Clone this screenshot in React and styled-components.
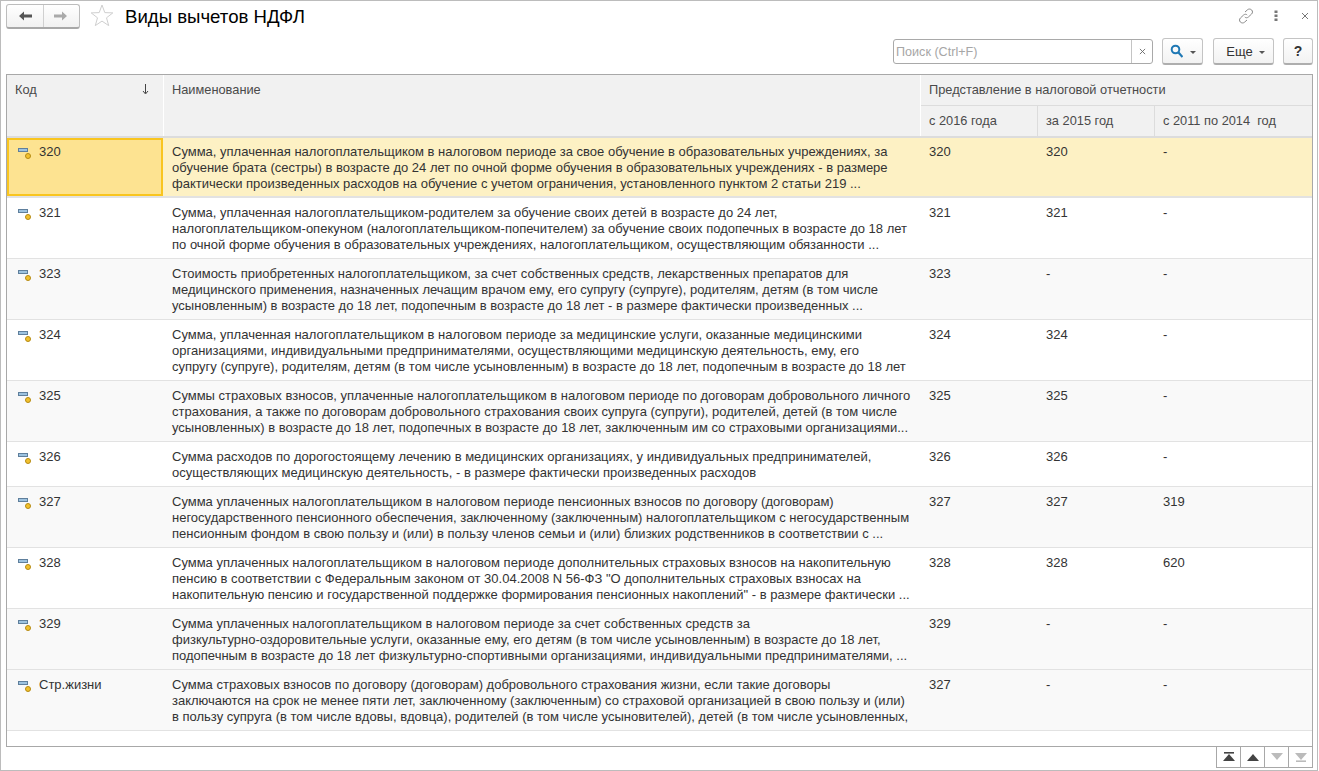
import React from 'react'
import styled, { createGlobalStyle } from 'styled-components'

const Global = createGlobalStyle`
  html, body { margin: 0; padding: 0; background: #fff; }
  body { font-family: "Liberation Sans", Arial, sans-serif; font-size: 13px; color: #333; }
`

const rows = [
  { code: '320', selected: true, a: '320', b: '320', c: '-', lines: [
    'Сумма, уплаченная налогоплательщиком в налоговом периоде за свое обучение в образовательных учреждениях, за',
    'обучение брата (сестры) в возрасте до 24 лет по очной форме обучения в образовательных учреждениях - в размере',
    'фактически произведенных расходов на обучение с учетом ограничения, установленного пунктом 2 статьи 219 ...',
  ] },
  { code: '321', a: '321', b: '321', c: '-', lines: [
    'Сумма, уплаченная налогоплательщиком-родителем за обучение своих детей в возрасте до 24 лет,',
    'налогоплательщиком-опекуном (налогоплательщиком-попечителем) за обучение своих подопечных в возрасте до 18 лет',
    'по очной форме обучения в образовательных учреждениях, налогоплательщиком, осуществляющим обязанности ...',
  ] },
  { code: '323', alt: true, a: '323', b: '-', c: '-', lines: [
    'Стоимость приобретенных налогоплательщиком, за счет собственных средств, лекарственных препаратов для',
    'медицинского применения, назначенных лечащим врачом ему, его супругу (супруге), родителям, детям (в том числе',
    'усыновленным) в возрасте до 18 лет, подопечным в возрасте до 18 лет - в размере фактически произведенных ...',
  ] },
  { code: '324', a: '324', b: '324', c: '-', lines: [
    'Сумма, уплаченная налогоплательщиком в налоговом периоде за медицинские услуги, оказанные медицинскими',
    'организациями, индивидуальными предпринимателями, осуществляющими медицинскую деятельность, ему, его',
    'супругу (супруге), родителям, детям (в том числе усыновленным) в возрасте до 18 лет, подопечным в возрасте до 18 лет',
  ] },
  { code: '325', alt: true, a: '325', b: '325', c: '-', lines: [
    'Суммы страховых взносов, уплаченные налогоплательщиком в налоговом периоде по договорам добровольного личного',
    'страхования, а также по договорам добровольного страхования своих супруга (супруги), родителей, детей (в том числе',
    'усыновленных) в возрасте до 18 лет, подопечных в возрасте до 18 лет, заключенным им со страховыми организациями...',
  ] },
  { code: '326', a: '326', b: '326', c: '-', lines: [
    'Сумма расходов по дорогостоящему лечению в медицинских организациях, у индивидуальных предпринимателей,',
    'осуществляющих медицинскую деятельность, - в размере фактически произведенных расходов',
  ] },
  { code: '327', alt: true, a: '327', b: '327', c: '319', lines: [
    'Сумма уплаченных налогоплательщиком в налоговом периоде пенсионных взносов по договору (договорам)',
    'негосударственного пенсионного обеспечения, заключенному (заключенным) налогоплательщиком с негосударственным',
    'пенсионным фондом в свою пользу и (или) в пользу членов семьи и (или) близких родственников в соответствии с ...',
  ] },
  { code: '328', a: '328', b: '328', c: '620', lines: [
    'Сумма уплаченных налогоплательщиком в налоговом периоде дополнительных страховых взносов на накопительную',
    'пенсию в соответствии с Федеральным законом от 30.04.2008 N 56-ФЗ "О дополнительных страховых взносах на',
    'накопительную пенсию и государственной поддержке формирования пенсионных накоплений" - в размере фактически ...',
  ] },
  { code: '329', alt: true, a: '329', b: '-', c: '-', lines: [
    'Сумма уплаченных налогоплательщиком в налоговом периоде за счет собственных средств за',
    'физкультурно-оздоровительные услуги, оказанные ему, его детям (в том числе усыновленным) в возрасте до 18 лет,',
    'подопечным в возрасте до 18 лет физкультурно-спортивными организациями, индивидуальными предпринимателями, ...',
  ] },
  { code: 'Стр.жизни', alt: true, a: '327', b: '-', c: '-', lines: [
    'Сумма страховых взносов по договору (договорам) добровольного страхования жизни, если такие договоры',
    'заключаются на срок не менее пяти лет, заключенному (заключенным) со страховой организацией в свою пользу и (или)',
    'в пользу супруга (в том числе вдовы, вдовца), родителей (в том числе усыновителей), детей (в том числе усыновленных,',
  ] },
]

const COLS = '156px 757px 117px 117px 1fr'

const Window = styled.div`
  box-sizing: border-box;
  width: 1318px;
  height: 771px;
  border: 1px solid #bcbcbc;
  padding: 0 4px 0 5px;
  display: flex;
  flex-direction: column;
  overflow: hidden;
`

const TitleBar = styled.div`
  height: 33px;
  flex: none;
  padding-top: 3px;
  box-sizing: border-box;
  display: flex;
  align-items: flex-start;
`

const NavGroup = styled.div`
  display: flex;
  width: 74px;
  height: 25px;
  box-sizing: border-box;
  border: 1px solid #bdbdbd;
  border-bottom: 2px solid #a8a8a8;
  border-radius: 3px;
  background: linear-gradient(#fff, #f1f1f1);
  margin-right: 10px;
`

const NavButton = styled.div`
  flex: 1;
  display: flex;
  align-items: center;
  justify-content: center;
  & + & { border-left: 1px solid #d0d0d0; }
`

const Title = styled.h1`
  margin: 2px 0 0 11px;
  font-size: 18.6px;
  line-height: 22px;
  font-weight: 400;
  color: #000;
`

const Spacer = styled.div`
  flex: 1;
`

const WinIcons = styled.div`
  display: flex;
  align-items: center;
  gap: 20px;
  padding-right: 4px;
  height: 24px;
`

const CloseWrap = styled.div`
  margin-left: 3px;
  display: flex;
`

const CommandBar = styled.div`
  height: 40px;
  flex: none;
  box-sizing: border-box;
  padding-top: 4px;
  display: flex;
  justify-content: flex-end;
  align-items: flex-start;
`

const SearchBox = styled.div`
  width: 260px;
  height: 25px;
  box-sizing: border-box;
  margin: 1px 9px 0 0;
  border: 1px solid #a9a9a9;
  border-radius: 3px;
  display: flex;
  align-items: center;
  background: #fff;
`

const SearchText = styled.div`
  flex: 1;
  padding-left: 2px;
  font-size: 12.6px;
  color: #a6a6a6;
`

const SearchClear = styled.div`
  width: 20px;
  height: 100%;
  border-left: 1px solid #c4c4c4;
  display: flex;
  align-items: center;
  justify-content: center;
`

const ToolButton = styled.div`
  width: ${p => p.$w}px;
  height: 27px;
  box-sizing: border-box;
  margin-left: ${p => p.$ml || 0}px;
  border: 1px solid #c4c4c4;
  border-bottom: 2px solid #aeaeae;
  border-radius: 3px;
  background: linear-gradient(#fff, #f2f2f2);
  display: flex;
  align-items: center;
  justify-content: center;
  gap: ${p => p.$gap || 0}px;
  padding-left: ${p => p.$pl || 0}px;
  font-size: ${p => p.$size || 13}px;
  font-weight: ${p => p.$bold ? 700 : 400};
  color: #333;
`

const Caret = styled.span`
  width: 0;
  height: 0;
  margin-top: 2px;
  border-left: 3px solid transparent;
  border-right: 3px solid transparent;
  border-top: 3px solid #555;
`

const Table = styled.div`
  box-sizing: border-box;
  height: 673px;
  width: 1307px;
  flex: none;
  border: 1px solid #a8a8a8;
  display: flex;
  flex-direction: column;
  background: #fff;
`

const Header = styled.div`
  display: grid;
  grid-template-columns: 156px 757px 1fr;
  height: 63px;
  box-sizing: border-box;
  border-bottom: 2px solid #dcdcdc;
  background: #f1f1f1;
  color: #4a4a4a;
  flex: none;
  font-size: 12.8px;
`

const HeadCell = styled.div`
  box-sizing: border-box;
  padding: 7px 8px 0;
  display: flex;
  justify-content: space-between;
  align-items: flex-start;
  line-height: 15px;
  & + & { border-left: 1px solid #fff; }
`

const HeadGroup = styled.div`
  border-left: 1px solid #fff;
  display: flex;
  flex-direction: column;
`

const HeadGroupTitle = styled.div`
  height: 31px;
  flex: none;
  box-sizing: border-box;
  padding: 7px 8px 0;
  line-height: 15px;
  border-bottom: 1px solid #dcdcdc;
`

const HeadSubRow = styled.div`
  flex: 1;
  display: grid;
  grid-template-columns: 116px 117px 1fr;
`

const HeadSub = styled.div`
  padding: 7px 8px 0;
  line-height: 16px;
  white-space: pre;
  & + & { border-left: 1px solid #dcdcdc; }
`

const Row = styled.div`
  display: grid;
  grid-template-columns: ${COLS};
  flex: none;
  height: ${p => p.$selected ? 60 : p.$lines === 2 ? 45 : 61}px;
  box-sizing: border-box;
  border-bottom: ${p => p.$selected ? 2 : 1}px solid #e2e2e2;
  background: ${p => p.$selected ? '#fdf1c4' : p.$alt ? '#f9f9f9' : '#fff'};
`

const Cell = styled.div`
  box-sizing: border-box;
  padding: ${p => p.$selected ? 6 : 7}px 8px 0;
  line-height: 16px;
  color: #333;
  & + & { border-left: 1px solid ${p => p.$selected ? '#fff' : 'transparent'}; }
`

const CodeCell = styled(Cell)`
  display: flex;
  align-items: flex-start;
  gap: 8px;
  padding-left: 10px;
  ${p => p.$selected && `
    background: #fde391;
    outline: 2px solid #f9c51f;
    outline-offset: -2px;
  `}
`

const Line = styled.div`
  white-space: nowrap;
`

const Footer = styled.div`
  flex: none;
  display: flex;
  justify-content: flex-end;
  width: 1307px;
`

const Pager = styled.div`
  display: flex;
  height: 21px;
  box-sizing: border-box;
  border: 1px solid #a8a8a8;
  border-top: 0;
`

const PagerBtn = styled.div`
  width: 24px;
  box-sizing: border-box;
  display: flex;
  align-items: center;
  justify-content: center;
  &:first-child { width: 23px; }
  & + & { border-left: 1px solid #a8a8a8; }
`

const RowIconSvg = styled.svg`
  flex: none;
  margin-top: 2px;
`

const RowIcon = () => (
  <RowIconSvg width="14" height="14" viewBox="0 0 14 14">
    <rect x="1.5" y="2.5" width="9" height="3" fill="#9dc3e0" stroke="#5f7f9c" />
    <circle cx="11" cy="10" r="2.5" fill="#f2c12e" stroke="#b58a12" />
  </RowIconSvg>
)

const ArrowLeft = ({ color }) => (
  <svg width="16" height="12" viewBox="0 0 16 12">
    <path d="M2 6 L7 1.5 V4.5 H15 V7.5 H7 V10.5 Z" fill={color} />
  </svg>
)

const ArrowRight = ({ color }) => (
  <svg width="16" height="12" viewBox="0 0 16 12">
    <path d="M14 6 L9 1.5 V4.5 H1 V7.5 H9 V10.5 Z" fill={color} />
  </svg>
)

const Star = () => (
  <svg width="24" height="23" viewBox="0 0 24 23">
    <path d="M12 1 L14.8 8.6 L22.8 8.9 L16.5 13.8 L18.7 21.6 L12 17.1 L5.3 21.6 L7.5 13.8 L1.2 8.9 L9.2 8.6 Z" fill="none" stroke="#cfcfcf" strokeWidth="1" />
  </svg>
)

const LinkIcon = () => (
  <svg width="16" height="16" viewBox="0 0 16 16" fill="none" stroke="#8a8a8a" strokeWidth="1">
    <path d="M7 4 L9.6 1.7 C10.8 .7 12.6 .9 13.7 2 C14.8 3.2 14.7 5 13.6 6 L10.4 9 C9.3 10 7.7 10 6.8 9" />
    <path d="M9 12 L6.4 14.3 C5.2 15.3 3.4 15.1 2.3 14 C1.2 12.8 1.3 11 2.4 10 L5.6 7 C6.7 6 8.3 6 9.2 7" />
  </svg>
)

const Dots = () => (
  <svg width="4" height="12" viewBox="0 0 4 12">
    <rect x="0.5" y="0.5" width="3" height="2.5" fill="#777" />
    <rect x="0.5" y="4.5" width="3" height="2.5" fill="#777" />
    <rect x="0.5" y="8.5" width="3" height="2.5" fill="#777" />
  </svg>
)

const Cross = ({ size = 8, color = '#777' }) => (
  <svg width={size} height={size} viewBox="0 0 8 8" stroke={color} strokeWidth="1">
    <path d="M1 1 L7 7 M7 1 L1 7" />
  </svg>
)

const Magnifier = () => (
  <svg width="13" height="14" viewBox="0 0 13 14" fill="none">
    <circle cx="5.5" cy="5.5" r="3.8" stroke="#1f78b4" strokeWidth="2" />
    <path d="M8.5 8.5 L12.5 13" stroke="#1f78b4" strokeWidth="2.2" />
  </svg>
)

const SortSvg = styled.svg`
  margin-top: 2px;
  margin-right: 6px;
`

const SortDown = () => (
  <SortSvg width="7" height="11" viewBox="0 0 7 11">
    <path d="M3.5 0 V9 M1 7 L3.5 10 L6 7" fill="none" stroke="#444" strokeWidth="1" />
  </SortSvg>
)

const PageIcon = ({ dir, bar, color }) => (
  <svg width="14" height="10" viewBox="0 0 14 10">
    {bar && <rect x="2" y={dir === 'up' ? 0 : 8.4} width="10" height="1.6" fill={color} />}
    <path d={dir === 'up' ? 'M7 2 L13 9 H1 Z' : 'M7 8 L13 1 H1 Z'} fill={color} />
  </svg>
)

export default function App() {
  return (
    <>
      <Global />
      <Window>
        <TitleBar>
          <NavGroup>
            <NavButton><ArrowLeft color="#555" /></NavButton>
            <NavButton><ArrowRight color="#aaa" /></NavButton>
          </NavGroup>
          <Star />
          <Title>Виды вычетов НДФЛ</Title>
          <Spacer />
          <WinIcons>
            <LinkIcon />
            <Dots />
            <CloseWrap><Cross /></CloseWrap>
          </WinIcons>
        </TitleBar>
        <CommandBar>
          <SearchBox>
            <SearchText>Поиск (Ctrl+F)</SearchText>
            <SearchClear><Cross size={7} color="#666" /></SearchClear>
          </SearchBox>
          <ToolButton $w={41} $gap={7}><Magnifier /><Caret /></ToolButton>
          <ToolButton $w={61} $ml={10} $gap={6} $pl={4}>Еще<Caret /></ToolButton>
          <ToolButton $w={30} $ml={9} $bold $size={14}>?</ToolButton>
        </CommandBar>
        <Table>
          <Header>
            <HeadCell>Код<SortDown /></HeadCell>
            <HeadCell>Наименование</HeadCell>
            <HeadGroup>
              <HeadGroupTitle>Представление в налоговой отчетности</HeadGroupTitle>
              <HeadSubRow>
                <HeadSub>с 2016 года</HeadSub>
                <HeadSub>за 2015 год</HeadSub>
                <HeadSub>с 2011 по 2014  год</HeadSub>
              </HeadSubRow>
            </HeadGroup>
          </Header>
          {rows.map(r => (
            <Row key={r.code} $selected={r.selected} $alt={r.alt} $lines={r.lines.length}>
              <CodeCell $selected={r.selected}><RowIcon />{r.code}</CodeCell>
              <Cell $selected={r.selected}>{r.lines.map(l => <Line key={l}>{l}</Line>)}</Cell>
              <Cell $selected={r.selected}>{r.a}</Cell>
              <Cell $selected={r.selected}>{r.b}</Cell>
              <Cell $selected={r.selected}>{r.c}</Cell>
            </Row>
          ))}
        </Table>
        <Footer>
          <Pager>
            <PagerBtn><PageIcon dir="up" bar color="#444" /></PagerBtn>
            <PagerBtn><PageIcon dir="up" color="#444" /></PagerBtn>
            <PagerBtn><PageIcon dir="down" color="#bbb" /></PagerBtn>
            <PagerBtn><PageIcon dir="down" bar color="#bbb" /></PagerBtn>
          </Pager>
        </Footer>
      </Window>
    </>
  )
}
